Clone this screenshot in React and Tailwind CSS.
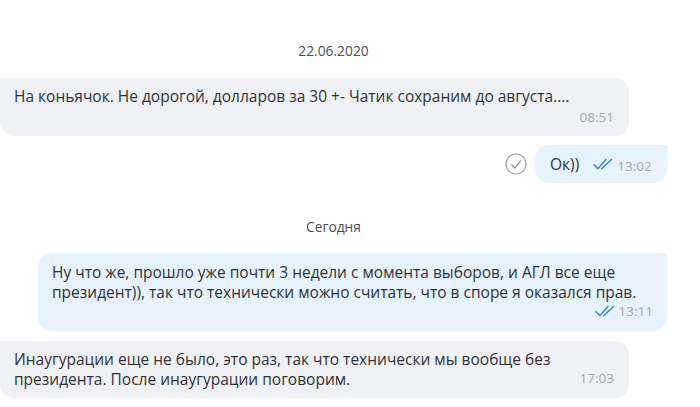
import React from "react";

function DoubleCheck({ className }) {
  return (
    <svg viewBox="0 0 20 12" fill="none" stroke="#3f83c8" strokeWidth="1.4" className={className}>
      <path d="M0.6 6.2 L4.8 10.6 L13.4 1" />
      <path d="M8 10.8 L8.6 10.8 L19 1" />
    </svg>
  );
}

function DateLabel({ children, className }) {
  return (
    <div className={`w-[667px] text-center text-[13.8px] leading-[16px] text-[#4d4d4d] ${className}`}>
      {children}
    </div>
  );
}

function Time({ children }) {
  return <span className="text-[13.5px] leading-[16px] text-[#a3a8ad]">{children}</span>;
}

export default function App() {
  return (
    <div
      className="flex flex-col h-[407px] w-[700px] overflow-hidden bg-white pt-[43px] text-[15.5px] leading-[20px] text-[#303236]"
      style={{ fontFamily: '"Open Sans", sans-serif' }}
    >
      <DateLabel>22.06.2020</DateLabel>

      <div className="mt-[19px] w-[629px] h-[58px] rounded-r-[14px] rounded-bl-[14px] bg-[#f0f1f5] pl-[14px] pr-[15px] pt-[8px]">
        <p>На коньячок. Не дорогой, долларов за 30 +- Чатик сохраним до августа....</p>
        <div className="flex justify-end pt-[3px]">
          <Time>08:51</Time>
        </div>
      </div>

      <div className="mt-[9px] flex items-center justify-end gap-[8px] pr-[33px]">
        <svg viewBox="0 0 22 22" fill="none" className="h-[22px] w-[22px]">
          <circle cx="11" cy="11" r="10" stroke="#9a9a9a" strokeWidth="1.2" />
          <path d="M6.5 11.5 L9.8 15 L15.8 7.5" stroke="#8a8a8a" strokeWidth="1.2" />
        </svg>
        <div className="flex h-[38px] w-[132px] items-center rounded-l-[14px] rounded-br-[14px] bg-[#e6f3fd] pl-[15px]">
          <span>Ок))</span>
          <DoubleCheck className="ml-[14px] h-[12px] w-[20px]" />
          <span className="ml-[4px] mt-[2px]">
            <Time>13:02</Time>
          </span>
        </div>
      </div>

      <DateLabel className="mt-[36px]">Сегодня</DateLabel>

      <div className="mt-[18px] flex justify-end pr-[33px]">
        <div className="h-[78px] w-[629px] rounded-l-[14px] rounded-br-[14px] bg-[#e6f3fd] px-[14px] pt-[9px]">
          <p>
            Ну что же, прошло уже почти 3 недели с момента выборов, и АГЛ все еще президент)), так что технически можно считать, что в споре я оказался прав.
          </p>
          <div className="flex items-center justify-end gap-[4px] pt-[1px]">
            <DoubleCheck className="h-[12px] w-[20px]" />
            <Time>13:11</Time>
          </div>
        </div>
      </div>

      <div className="mt-[10px] h-[57px] w-[629px] rounded-r-[14px] rounded-bl-[14px] bg-[#f0f1f5] pl-[14px] pt-[8px] relative">
        <p className="w-[570px]">
          Инаугурации еще не было, это раз, так что технически мы вообще без президента. После инаугурации поговорим.
        </p>
        <div className="absolute bottom-[11px] right-[15px]">
          <Time>17:03</Time>
        </div>
      </div>
    </div>
  );
}
